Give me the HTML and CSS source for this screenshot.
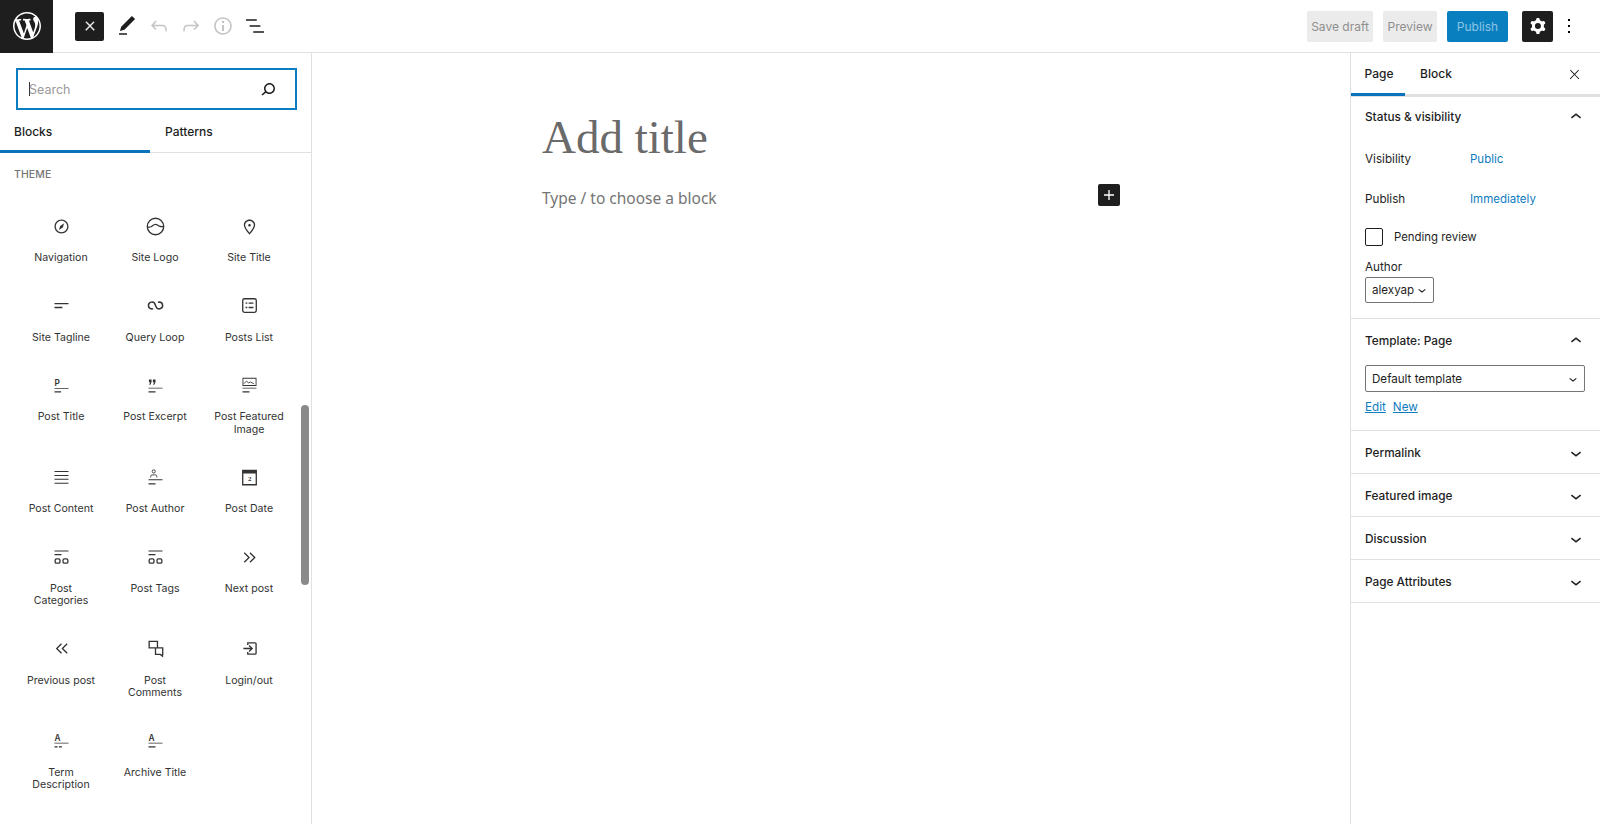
FILE: index.html
```html
<!DOCTYPE html>
<html lang="en">
<head>
    <meta charset="UTF-8">
    <meta name="viewport" content="width=device-width, initial-scale=1.0">
    <title>Add New Page</title>
    <link rel="stylesheet" href="styles.css">
</head>
<body>
    <!-- top toolbar -->
    <div class="topbar">
        <a href="#" class="wp-logo">
            <svg viewBox="0 0 20 20" width="28" height="28"><path d="M20 10c0-5.51-4.49-10-10-10C4.48 0 0 4.49 0 10c0 5.52 4.48 10 10 10 5.51 0 10-4.48 10-10zM7.78 15.37L4.37 6.22c.55-.02 1.17-.08 1.17-.08.5-.06.44-1.13-.06-1.11 0 0-1.45.11-2.37.11-.18 0-.37 0-.58-.01C4.12 2.69 6.87 1.11 10 1.11c2.33 0 4.45.87 6.05 2.34-.68-.11-1.65.39-1.65 1.58 0 .74.45 1.36.9 2.1.35.61.55 1.36.55 2.46 0 1.49-1.4 5-1.4 5l-3.03-8.37c.54-.02.82-.17.82-.17.5-.05.44-1.25-.06-1.22 0 0-1.44.12-2.38.12-.87 0-2.33-.12-2.33-.12-.5-.03-.56 1.2-.06 1.22l.92.08 1.26 3.41zM17.41 10c.24-.64.74-1.87.43-4.25.7 1.29 1.05 2.71 1.05 4.25 0 3.29-1.73 6.24-4.4 7.78.97-2.59 1.94-5.2 2.92-7.78zM6.1 18.09C3.12 16.65 1.11 13.53 1.11 10c0-1.3.23-2.48.72-3.59C3.25 10.3 4.67 14.2 6.1 18.09zm4.03-6.63l2.58 6.98c-.86.29-1.76.45-2.71.45-.79 0-1.57-.11-2.29-.33.81-2.38 1.62-4.74 2.42-7.1z"/></svg>
        </a>
        <div class="tools">
            <button class="tool-close"><svg class="icon" viewBox="0 0 24 24"><path class="x-bold" d="M13 11.8l6.1-6.3-1-1-6.1 6.2-6.1-6.2-1 1 6.1 6.3-6.5 6.7 1 1 6.5-6.6 6.5 6.6 1-1z"/></svg></button>
            <button class="tool"><svg class="icon" viewBox="0 0 24 24"><path d="M20.1 5.1L16.9 2 6.2 12.7l-1.3 4.4 4.5-1.3L20.1 5.1zM4 20.8h8v-1.5H4v1.5z"/></svg></button>
            <button class="tool is-off"><svg class="icon" viewBox="0 0 24 24"><path d="M18.3 11.7c-.6-.6-1.4-.9-2.3-.9H6.7l2.9-3.3-1.1-1-4.5 5L8.5 16l1-1-2.7-2.7H16c.5 0 .9.2 1.3.5 1 1 1 3.4 1 4.5v.3h1.5v-.2c0-1.5 0-4.3-1.5-5.7z"/></svg></button>
            <button class="tool is-off"><svg class="icon" viewBox="0 0 24 24"><path d="M15.6 6.5l-1.1 1 2.9 3.3H8c-.9 0-1.7.3-2.3.9-1.4 1.5-1.4 4.2-1.4 5.6v.2h1.5v-.3c0-1.1 0-3.5 1-4.5.3-.3.7-.5 1.3-.5h9.2L14.5 15l1.1 1.1 4.6-4.6-4.6-5z"/></svg></button>
            <button class="tool is-off"><svg class="icon" viewBox="0 0 24 24"><path d="M12 3.2c-4.8 0-8.8 3.9-8.8 8.8 0 4.8 3.9 8.8 8.8 8.8 4.8 0 8.8-3.9 8.8-8.8 0-4.8-4-8.8-8.8-8.8zm0 16c-4 0-7.2-3.3-7.2-7.2C4.8 8 8 4.8 12 4.8s7.2 3.3 7.2 7.2c0 4-3.2 7.2-7.2 7.2zM11 17h2v-6h-2v6zm0-8h2V7h-2v2z"/></svg></button>
            <button class="tool"><svg class="icon" viewBox="0 0 24 24"><path d="M13.8 5.2H3v1.5h10.8V5.2zm-3.6 12v1.5H21v-1.5H10.2zm7.2-6H6.6v1.5h10.8v-1.5z"/></svg></button>
        </div>
        <div class="actions">
            <button class="btn-muted btn-save">Save draft</button>
            <button class="btn-muted btn-preview">Preview</button>
            <button class="btn-publish">Publish</button>
            <button class="btn-settings"><svg class="icon" viewBox="0 0 24 24"><path fill-rule="evenodd" d="M10.289 4.836A1 1 0 0111.275 4h1.306a1 1 0 01.987.836l.244 1.466c.787.26 1.503.679 2.108 1.218l1.393-.522a1 1 0 011.216.437l.653 1.13a1 1 0 01-.23 1.273l-1.148.944a6.025 6.025 0 010 2.435l1.149.946a1 1 0 01.23 1.272l-.653 1.13a1 1 0 01-1.216.437l-1.394-.522c-.605.54-1.32.958-2.108 1.218l-.244 1.466a1 1 0 01-.987.836h-1.306a1 1 0 01-.986-.836l-.244-1.466a5.995 5.995 0 01-2.108-1.218l-1.394.522a1 1 0 01-1.217-.436l-.653-1.131a1 1 0 01.23-1.272l1.149-.946a6.026 6.026 0 010-2.435l-1.148-.944a1 1 0 01-.23-1.272l.653-1.131a1 1 0 011.217-.437l1.393.522a5.994 5.994 0 012.108-1.218l.244-1.466zM14.929 12a3 3 0 11-6 0 3 3 0 016 0z"/></svg></button>
            <button class="btn-more"><svg class="icon" viewBox="0 0 24 24"><path d="M13 19h-2v-2h2v2zm0-6h-2v-2h2v2zm0-6h-2V5h2v2z"/></svg></button>
        </div>
    </div>

    <div class="layout">
        <!-- block inserter -->
        <div class="inserter">
            <div class="search-wrap">
                <div class="search-box">
                    <span class="caret"></span>
                    <span class="search-text">Search</span>
                    <svg class="icon" viewBox="0 0 24 24"><path d="M13.5 6C10.5 6 8 8.5 8 11.5c0 1.1.3 2.1.9 3l-3.4 3 1 1.1 3.4-2.9c1 .9 2.2 1.4 3.6 1.4 3 0 5.5-2.5 5.5-5.5C19 8.5 16.5 6 13.5 6zm0 9.5c-2.2 0-4-1.8-4-4s1.8-4 4-4 4 1.8 4 4-1.8 4-4 4z"/></svg>
                </div>
            </div>
            <div class="inserter-tabs">
                <a href="#" class="inserter-tab active">Blocks</a>
                <a href="#" class="inserter-tab">Patterns</a>
            </div>
            <div class="category">THEME</div>
            <div class="block-grid">
                <div class="block-item">
                    <svg class="icon" viewBox="0 0 24 24"><path d="M12 4c-4.4 0-8 3.6-8 8s3.6 8 8 8 8-3.6 8-8-3.6-8-8-8zm0 14.5c-3.6 0-6.5-2.9-6.500-6.500S8.400 5.500 12 5.500s6.500 2.900 6.500 6.500-2.900 6.500-6.500 6.500zM9 16l4.500-3L15 8.400l-4.500 3L9 16z"/></svg>
                    <span>Navigation</span>
                </div>
                <div class="block-item">
                    <svg class="icon" viewBox="0 0 24 24"><circle class="line" cx="12" cy="12" r="9.400"/><path class="line" d="M2.700 12.500c1.800.4 3.300.3 4.700-.5 1.400-.9 2.600-2.400 4.600-2.400 1.900 0 3 1.300 4.500 2 1.300.6 2.800.7 4.800.4"/></svg>
                    <span>Site Logo</span>
                </div>
                <div class="block-item">
                    <svg class="icon" viewBox="0 0 24 24"><path d="M12 9c-.8 0-1.500.7-1.500 1.500S11.200 12 12 12s1.500-.7 1.500-1.500S12.800 9 12 9zm0-5c-3.600 0-6.500 2.800-6.500 6.200 0 .8.3 1.800.9 3.100.5 1.100 1.200 2.300 2 3.600.7 1 3 3.800 3.200 3.900l.4.5.4-.5c.2-.2 2.600-2.900 3.200-3.900.8-1.200 1.500-2.500 2-3.600.6-1.300.9-2.300.9-3.100C18.500 6.800 15.600 4 12 4zm4.300 8.700c-.5 1-1.100 2.200-1.900 3.400-.5.7-1.700 2.200-2.400 3-.7-.8-1.900-2.300-2.400-3-.8-1.200-1.400-2.300-1.900-3.300-.6-1.400-.7-2.200-.7-2.500 0-2.600 2.200-4.700 5-4.700s5 2.100 5 4.700c0 .2-.1 1-.7 2.400z"/></svg>
                    <span>Site Title</span>
                </div>
                <div class="block-item">
                    <svg class="icon" viewBox="0 0 24 24"><path d="M4 10.500h16V9H4v1.500zM4 15h9v-1.500H4V15z"/></svg>
                    <span>Site Tagline</span>
                </div>
                <div class="block-item">
                    <svg class="icon" viewBox="0 0 24 24"><path class="line bold" d="M9.400 15.600c-.5.200-1 .3-1.600.3a3.900 3.900 0 1 1 3.800-4.900l1 2.400a3.900 3.900 0 1 0 3.800-5.300c-.6 0-1.100.1-1.600.3"/></svg>
                    <span>Query Loop</span>
                </div>
                <div class="block-item">
                    <svg class="icon" viewBox="0 0 24 24"><rect class="line" x="4.250" y="4.250" width="15.500" height="15.500" rx="2"/><path d="M7.500 8.500h2V10h-2zM11 8.500h5.500V10H11zM7.500 13.500h2V15h-2zM11 13.500h5.500V15H11z"/></svg>
                    <span>Posts List</span>
                </div>
                <div class="block-item">
                    <svg class="icon" viewBox="0 0 24 24"><text class="icon-letter" x="4" y="12.500">P</text><path d="M4 15h16v1H4zM4 18.500h7.500V20H4z"/></svg>
                    <span>Post Title</span>
                </div>
                <div class="block-item">
                    <svg class="icon" viewBox="0 0 24 24"><path d="M4.500 5h3v3l-1.300 3H4.800l1-2.800H4.500zM9 5h3v3l-1.300 3H9.300l1-2.800H9zM4 14.500h16v1H4zM4 18.500h8V20H4z"/></svg>
                    <span>Post Excerpt</span>
                </div>
                <div class="block-item">
                    <svg class="icon" viewBox="0 0 24 24"><path d="M4 3h16v9.500H4zM5 4.200v7.100h14V4.200zM4 14.500h16v1H4zM4 18.500h8V20H4z" fill-rule="evenodd"/><path class="line thin" d="M5.500 10l3-3 2.500 2 2-1 4 2"/></svg>
                    <span>Post Featured<br>Image</span>
                </div>
                <div class="block-item">
                    <svg class="icon" viewBox="0 0 24 24"><path d="M4 4.500h16v1.200H4zM4 9h16v1.200H4zM4 13.500h16v1.200H4zM4 18h16v1.200H4z"/></svg>
                    <span>Post Content</span>
                </div>
                <div class="block-item">
                    <svg class="icon" viewBox="0 0 24 24"><circle class="line thin" cx="10" cy="5" r="1.800"/><path class="line thin" d="M6.500 12v-1.500c0-1 .8-1.500 1.500-1.500h4c.8 0 1.500.6 1.500 1.500V12"/><path d="M4 14h16v1H4zM4 18.500h8V20H4z"/></svg>
                    <span>Post Author</span>
                </div>
                <div class="block-item">
                    <svg class="icon" viewBox="0 0 24 24"><path fill-rule="evenodd" d="M3.500 3h17v18h-17zM5 7.500v12h14v-12z"/><text class="icon-date" x="10.200" y="16.500">2</text></svg>
                    <span>Post Date</span>
                </div>
                <div class="block-item">
                    <svg class="icon" viewBox="0 0 24 24"><path d="M4 4h16v1H4zM4 8h8v1.500H4z"/><rect class="line" x="4.750" y="13.500" width="5.500" height="5" rx="1.500"/><rect class="line" x="13.750" y="13.500" width="5.500" height="5" rx="1.500"/></svg>
                    <span>Post<br>Categories</span>
                </div>
                <div class="block-item">
                    <svg class="icon" viewBox="0 0 24 24"><path d="M4 4h16v1H4zM4 8h8v1.500H4z"/><rect class="line" x="4.750" y="13.500" width="5.500" height="5" rx="1.500"/><rect class="line" x="13.750" y="13.500" width="5.500" height="5" rx="1.500"/></svg>
                    <span>Post Tags</span>
                </div>
                <div class="block-item">
                    <svg class="icon" viewBox="0 0 24 24"><path class="line" d="M6 6.500l5.500 5.500L6 17.500M12.500 6.500L18 12l-5.500 5.500"/></svg>
                    <span>Next post</span>
                </div>
                <div class="block-item">
                    <svg class="icon" viewBox="0 0 24 24"><path class="line" d="M12 6.500L6.500 12l5.500 5.500M18.500 6.500L13 12l5.500 5.500"/></svg>
                    <span>Previous post</span>
                </div>
                <div class="block-item">
                    <svg class="icon" viewBox="0 0 24 24"><path class="line" d="M4.750 3.750h9.500v7.500h-9.500zM12 11.250h8.250v7.500H20v2l-2.500-2h-5.500z"/></svg>
                    <span>Post<br>Comments</span>
                </div>
                <div class="block-item">
                    <svg class="icon" viewBox="0 0 24 24"><path class="line" d="M10 8V5.500h8.500a1 1 0 0 1 1 1v11a1 1 0 0 1-1 1H10V16M5 12h9.500M11.500 8.500L15 12l-3.500 3.500"/></svg>
                    <span>Login/out</span>
                </div>
                <div class="block-item">
                    <svg class="icon" viewBox="0 0 24 24"><text class="icon-letter" x="4" y="12.500">A</text><path d="M4 14.500h16v1H4zM4 18.500h3.500V20H4zM9 18.500h3.500V20H9z"/></svg>
                    <span>Term<br>Description</span>
                </div>
                <div class="block-item">
                    <svg class="icon" viewBox="0 0 24 24"><text class="icon-letter" x="4" y="12.500">A</text><path d="M4 14.500h16v1H4zM4 18.500h8V20H4z"/></svg>
                    <span>Archive Title</span>
                </div>
            </div>
            <div class="scroll-thumb"></div>
        </div>

        <!-- editor canvas -->
        <div class="editor">
            <div class="canvas">
                <h1 class="post-title">Add title</h1>
                <div class="appender">
                    <span>Type / to choose a block</span>
                    <button class="add-block"><svg class="icon" viewBox="0 0 24 24"><path d="M18 11.200h-5.200V6h-1.600v5.200H6v1.600h5.200V18h1.600v-5.200H18z"/></svg></button>
                </div>
            </div>
        </div>

        <!-- settings sidebar -->
        <div class="settings">
            <div class="settings-tabs">
                <a href="#" class="settings-tab active">Page</a>
                <a href="#" class="settings-tab">Block</a>
                <svg class="icon close-x" viewBox="0 0 24 24"><path d="M13 11.800l6.100-6.300-1-1-6.100 6.200-6.100-6.200-1 1 6.100 6.300-6.500 6.700 1 1 6.500-6.600 6.500 6.600 1-1z"/></svg>
            </div>

            <div class="panel panel-status">
                <div class="panel-head">Status &amp; visibility<svg class="icon" viewBox="0 0 24 24"><path d="M6.500 12.400L12 8l5.500 4.400-.9 1.200L12 10l-4.500 3.600-1-1.200z"/></svg></div>
                <div class="row row-visibility"><span>Visibility</span><a href="#">Public</a></div>
                <div class="row row-publish"><span>Publish</span><a href="#">Immediately</a></div>
                <label class="pending"><span class="checkbox"></span>Pending review</label>
                <div class="author-label">Author</div>
                <div class="select select-author">alexyap<svg class="icon" viewBox="0 0 24 24"><path d="M17.500 11.600L12 16l-5.500-4.400.9-1.200L12 14l4.500-3.600 1 1.200z"/></svg></div>
            </div>

            <div class="panel panel-template">
                <div class="panel-head">Template: Page<svg class="icon" viewBox="0 0 24 24"><path d="M6.500 12.400L12 8l5.500 4.400-.9 1.200L12 10l-4.500 3.600-1-1.200z"/></svg></div>
                <div class="select select-template">Default template<svg class="icon" viewBox="0 0 24 24"><path d="M17.500 11.600L12 16l-5.500-4.400.9-1.200L12 14l4.500-3.600 1 1.200z"/></svg></div>
                <div class="template-links"><a href="#">Edit</a><a href="#">New</a></div>
            </div>

            <div class="panel panel-closed"><div class="panel-head">Permalink<svg class="icon" viewBox="0 0 24 24"><path d="M17.500 11.600L12 16l-5.500-4.400.9-1.200L12 14l4.500-3.600 1 1.200z"/></svg></div></div>
            <div class="panel panel-closed"><div class="panel-head">Featured image<svg class="icon" viewBox="0 0 24 24"><path d="M17.500 11.600L12 16l-5.500-4.400.9-1.200L12 14l4.500-3.600 1 1.200z"/></svg></div></div>
            <div class="panel panel-closed"><div class="panel-head">Discussion<svg class="icon" viewBox="0 0 24 24"><path d="M17.500 11.600L12 16l-5.500-4.400.9-1.200L12 14l4.500-3.600 1 1.200z"/></svg></div></div>
            <div class="panel panel-closed"><div class="panel-head">Page Attributes<svg class="icon" viewBox="0 0 24 24"><path d="M17.500 11.600L12 16l-5.500-4.400.9-1.200L12 14l4.500-3.600 1 1.200z"/></svg></div></div>
        </div>
    </div>
</body>
</html>
```

FILE: styles.css
```css
/* base */
* {
    box-sizing: border-box;
}

html, body {
    height: 100%;
}

body {
    margin: 0;
    font-family: 'Inter', sans-serif;
    font-size: 12px;
    color: #1e1e1e;
    background-color: #fff;
    overflow: hidden;
}

a {
    color: #0f7cc0;
    text-decoration: none;
}

button {
    border: none;
    padding: 0;
    background: none;
    font-family: inherit;
    display: flex;
    align-items: center;
    justify-content: center;
}

.icon {
    width: 24px;
    height: 24px;
    fill: currentColor;
    flex: none;
}

.line {
    fill: none;
    stroke: currentColor;
    stroke-width: 1.5;
}

.line.bold {
    stroke-width: 1.7;
}

.line.thin {
    stroke-width: 1;
}

.icon-letter {
    font-family: 'Inter', sans-serif;
    font-size: 9.5px;
    font-weight: 600;
}

.icon-date {
    font-family: 'Liberation Serif', serif;
    font-size: 8px;
    font-weight: 700;
}

/* top toolbar */
.topbar {
    height: 53px;
    display: flex;
    align-items: center;
    border-bottom: 1px solid #e0e0e0;
}

.wp-logo {
    width: 53px;
    height: 53px;
    background-color: #1e1e1e;
    display: flex;
    align-items: center;
    justify-content: center;
    fill: #fff;
}

.tools {
    display: flex;
    align-items: center;
    margin-left: 22px;
}

.tool-close {
    width: 29px;
    height: 29px;
    background-color: #1e1e1e;
    color: #fff;
    border-radius: 2px;
    margin-right: 7px;
}

.tool-close .icon {
    width: 14px;
    height: 14px;
}

.x-bold {
    stroke: currentColor;
    stroke-width: 1;
}

.tool {
    width: 32px;
    height: 32px;
    color: #1e1e1e;
}

.tool.is-off {
    color: #c4c4c4;
}

.actions {
    margin-left: auto;
    margin-right: 15px;
    display: flex;
    align-items: center;
}

.btn-muted {
    height: 31px;
    background-color: #ebebeb;
    color: #8f8f8f;
    font-size: 12px;
    border-radius: 2px;
}

.btn-save {
    width: 66px;
    margin-right: 10px;
}

.btn-preview {
    width: 54px;
    margin-right: 10px;
}

.btn-publish {
    width: 61px;
    height: 31px;
    background-color: #0a7fc0;
    color: #8fc4e3;
    font-size: 12px;
    border-radius: 2px;
    margin-right: 14px;
}

.btn-settings {
    width: 31px;
    height: 31px;
    background-color: #1e1e1e;
    color: #fff;
    border-radius: 2px;
}

.btn-more {
    width: 32px;
    height: 31px;
}

/* three columns under the toolbar */
.layout {
    display: flex;
    height: calc(100% - 53px);
}

/* block inserter */
.inserter {
    position: relative;
    width: 312px;
    flex: none;
    border-right: 1px solid #e0e0e0;
    overflow: hidden;
}

.search-wrap {
    padding: 15px 14px 0 16px;
}

.search-box {
    height: 42px;
    border: 2px solid #0a7cc2;
    display: flex;
    align-items: center;
    padding: 0 13px 0 11px;
    color: #9a9a9a;
}

.caret {
    width: 1px;
    height: 14px;
    background-color: #333;
    margin-right: -1px;
}

.search-text {
    flex: 1;
    font-size: 12.5px;
}

.search-box .icon {
    color: #1e1e1e;
    width: 24px;
    height: 24px;
    margin-right: 2px;
}

.inserter-tabs {
    display: flex;
    height: 43px;
    border-bottom: 1px solid #e0e0e0;
}

.inserter-tab {
    width: 150px;
    color: #1e1e1e;
    font-size: 12px;
    font-weight: 500;
    padding: 14px 0 0 14px;
    border-bottom: 3px solid transparent;
    margin-bottom: -1px;
}

.inserter-tab + .inserter-tab {
    padding-left: 15px;
}

.inserter-tab.active {
    border-bottom-color: #0a73bb;
}

.category {
    margin: 15px 0 0 14px;
    font-size: 10.5px;
    font-weight: 500;
    color: #757575;
    letter-spacing: 0.1px;
}

.block-grid {
    display: grid;
    grid-template-columns: repeat(3, 94px);
    padding: 32px 0 0 14px;
    row-gap: 28.5px;
}

.block-item {
    display: flex;
    flex-direction: column;
    align-items: center;
    text-align: center;
    font-size: 10.6px;
    line-height: 12.2px;
    color: #333;
}

.block-item .icon {
    width: 21px;
    height: 21px;
    margin: 2.5px 0 15.5px;
}

.scroll-thumb {
    position: absolute;
    left: 301px;
    top: 352px;
    width: 8px;
    height: 180px;
    border-radius: 4px;
    background-color: #8a8a8a;
}

/* editor canvas */
.editor {
    flex: 1;
    display: flex;
    justify-content: center;
}

.canvas {
    width: 578px;
    padding-top: 55px;
}

.post-title {
    margin: 0;
    font-family: 'Liberation Serif', serif;
    font-weight: 400;
    font-size: 47px;
    line-height: 58px;
    color: #6a6a6a;
}

.appender {
    display: flex;
    justify-content: space-between;
    align-items: center;
    margin-top: 21px;
    font-family: 'Noto Sans', sans-serif;
    font-size: 15.5px;
    line-height: 22px;
    color: #757575;
}

.add-block {
    width: 22px;
    height: 22px;
    background-color: #1e1e1e;
    color: #fff;
    border-radius: 2px;
    margin-top: -7px;
}

.add-block .icon {
    width: 20px;
    height: 20px;
}

/* settings sidebar */
.settings {
    width: 250px;
    flex: none;
    border-left: 1px solid #e0e0e0;
}

.settings-tabs {
    height: 44px;
    display: flex;
    align-items: center;
    border-bottom: 3px solid #e0e0e0;
}

.settings-tab {
    color: #1e1e1e;
    font-size: 12px;
    font-weight: 500;
    height: 44px;
    width: 54px;
    padding: 14px 0 0 2px;
    text-align: center;
    border-bottom: 3px solid transparent;
}

.settings-tab + .settings-tab {
    width: 60px;
}

.settings-tab.active {
    border-bottom-color: #0a73bb;
}

.close-x {
    margin-left: auto;
    margin-right: 18px;
    width: 15px;
    height: 15px;
    margin-top: 2px;
}

.panel {
    border-bottom: 1px solid #e0e0e0;
    padding: 0 14px;
}

.panel-head {
    height: 42px;
    display: flex;
    align-items: center;
    justify-content: space-between;
    font-size: 11.8px;
    font-weight: 500;
}

.panel-head .icon {
    margin-right: -1px;
    width: 22px;
    height: 22px;
}

.panel-status {
    height: 222px;
}

.panel-status .panel-head {
    height: 40px;
}

.panel-template {
    height: 112px;
}

.panel-template .panel-head {
    height: 43px;
}

.panel-closed {
    height: 43px;
}

.panel-closed .panel-head {
    height: 43px;
}

.row {
    display: flex;
    font-size: 11.7px;
}

.row span {
    width: 105px;
}

.row a {
    font-size: 11.5px;
}

.row-visibility {
    margin-top: 15px;
}

.row-publish {
    margin-top: 26px;
}

.pending {
    display: flex;
    align-items: center;
    margin-top: 22px;
    font-size: 11.4px;
}

.checkbox {
    width: 18px;
    height: 18px;
    border: 1px solid #1e1e1e;
    border-radius: 2px;
    margin-right: 11px;
}

.author-label {
    margin-top: 14px;
    font-size: 11.7px;
    line-height: 15px;
}

.select {
    display: flex;
    align-items: center;
    justify-content: space-between;
    border: 1px solid #757575;
    border-radius: 2px;
    font-size: 11.6px;
    padding-left: 6px;
}

.select .icon {
    width: 16px;
    height: 16px;
    margin-right: 3px;
}

.select-author {
    width: 69px;
    height: 26px;
    margin-top: 2px;
}

.select-template {
    height: 27px;
    margin-top: 3px;
    margin-right: 1px;
}

.template-links {
    margin-top: 8px;
    display: flex;
    gap: 7px;
    font-size: 11.7px;
}

.template-links a {
    text-decoration: underline;
}
```
